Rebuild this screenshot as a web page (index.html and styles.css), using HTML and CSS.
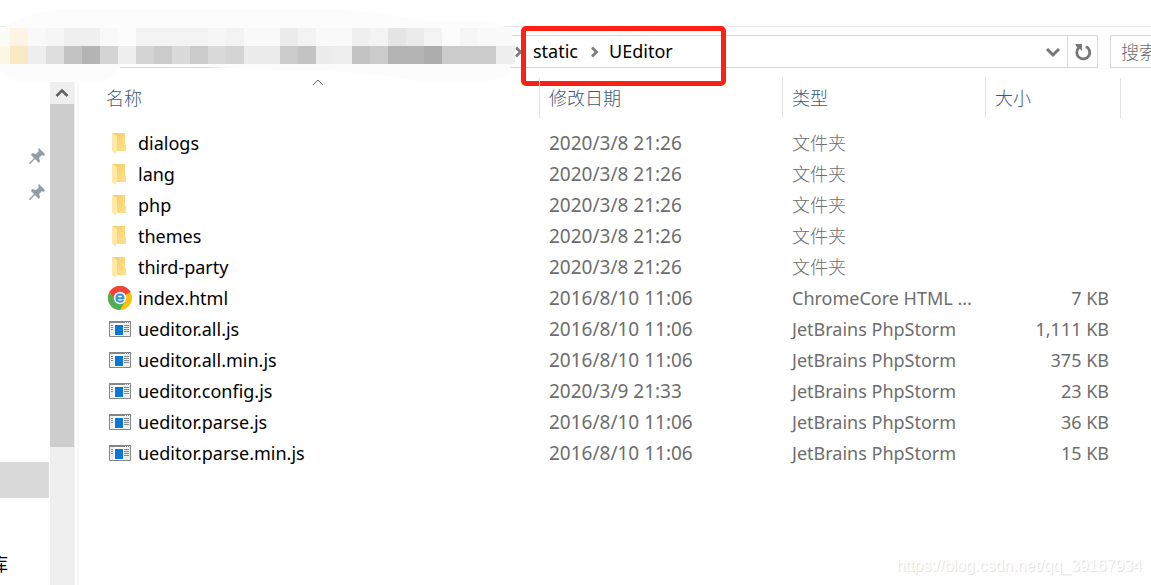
FILE: index.html
```html
<!DOCTYPE html>
<html lang="zh-CN">
<head>
<meta charset="utf-8">
<title>UEditor</title>
<link rel="stylesheet" href="styles.css">
</head>
<body>
<svg class="symbols" aria-hidden="true">
  <defs>
    <linearGradient id="fold" x1="0" x2="1" y1="0" y2="1"><stop offset="0" stop-color="#f3ce68"/><stop offset="1" stop-color="#ffe08a"/></linearGradient>
    <symbol id="folder" viewBox="0 0 24 24"><path fill="url(#fold)" d="M4 2h13v11l1 1v6H8z"/><path fill="#ffe9a8" d="M4 2l5 3v15.500H8V23l-4-3z"/></symbol>
    <symbol id="chrome" viewBox="0 0 24 24">
      <circle cx="12" cy="12" r="12" fill="#ffc107"/>
      <path fill="#f44336" d="M12 12L1.600 6A12 12 0 0 1 22.400 6z"/>
      <path fill="#f44336" d="M12 6h10.400A12 12 0 0 0 1.600 6l5.200 9z"/>
      <path fill="#4caf50" d="M1.600 6A12 12 0 0 0 12 24l5.200-9L12 12 6.800 15z"/>
      <circle cx="12" cy="12" r="6.200" fill="#f4faff"/>
      <path d="M8.500 12.200h7c0-5-7-5-7 0 0 4 5 4.500 6.700 1.800" fill="none" stroke="#3295cf" stroke-width="2"/>
    </symbol>
    <symbol id="app" viewBox="0 0 24 24">
      <path fill="#fff" stroke="#848789" d="M1.500 4.500h21v15h-21z"/><path fill="#848789" d="M1 4h22v2H1z"/>
      <path fill="#eee" d="M2 6h4v13H2zM16 6h6v13h-6z"/><path fill="#0878d7" d="M7 8h8v10H7z"/>
      <path stroke="#85898b" d="M3 8.500h2M3 10.500h2M3 12.500h2M16 8.500h5M16 10.500h5M16 12.500h5M16 14.500h5"/><path stroke="#fff" stroke-dasharray="1 1" d="M17 5.500h5"/>
    </symbol>
    <symbol id="pin" viewBox="0 0 16 16"><path fill="#919da6" d="M10 0l6 6-1 2-2-1-3 3 1 3-1 2-4-4-5 5H0v-1l5-5-3-3 1-2 4 1 3-3-1-1z"/></symbol>
    <symbol id="chevron" viewBox="0 0 10 12"><path d="M2 1.500l4.500 4.500L2 10.500" fill="none" stroke="#7d7d7d" stroke-width="2.800"/></symbol>
  </defs>
</svg>

<header class="toolbar">
  <nav class="address" aria-label="地址">
    <svg class="chevron"><use href="#chevron"/></svg>
    <button class="crumb" type="button">static</button>
    <svg class="chevron"><use href="#chevron"/></svg>
    <button class="crumb" type="button">UEditor</button>
    <button class="tool history" type="button" aria-label="历史记录"><svg width="16" height="12" viewBox="0 0 16 12"><path d="M2 3l6 6 6-6" fill="none" stroke="#777" stroke-width="3"/></svg></button>
    <button class="tool refresh" type="button" aria-label="刷新"><svg width="18" height="18" viewBox="0 0 18 18"><path d="M12 3.500A6.500 6.500 0 1 1 5 4.500" fill="none" stroke="#777" stroke-width="2.800"/><path d="M1 1h7v7L6 6 3.500 5z" fill="#777"/></svg></button>
  </nav>
  <div class="search-box"><input class="search" type="search" aria-label="搜索" placeholder="搜索"></div>
</header>

<svg class="mosaic" width="520" height="64" viewBox="0 0 520 64" aria-hidden="true">
  <path fill="#fcfcfc" d="M0 12Q30-8 60-8H340C390-7 415 5 440 4H490Q512 5 516 32Q513 60 490 63H415C370 54 340 53 275 52L122 45Q115 63 98 63H20Q5 62 0 52z"/>
  <g stroke-width="18" shape-rendering="crispEdges">
    <path stroke="#fcfbf8" d="M0 19h10"/><path stroke="#fdf4e6" d="M10 19h18"/><path stroke="#f9f9f9" d="M28 19h18M100 19h18M244 19h36M316 19h36M478 19h34"/><path stroke="#f6f6f6" d="M46 19h18M208 19h18M460 19h18"/><path stroke="#f0f0f0" d="M64 19h36M352 19h18"/><path stroke="#f3f3f3" d="M136 19h72M226 19h18M298 19h18M370 19h18M424 19h18"/><path stroke="#ebebeb" d="M280 19h18M406 19h18"/><path stroke="#e5e5e5" d="M388 19h18"/>
    <path stroke="#fcf7e6" d="M0 37h10"/><path stroke="#faeac4" d="M10 37h18"/><path stroke="#eee" d="M28 37h18M118 37h18M334 37h18M496 37h19"/><path stroke="#dedede" d="M46 37h18"/><path stroke="#c3c3c3" d="M64 37h18M298 37h18M352 37h18"/><path stroke="#b4b4b4" d="M82 37h18M388 37h36"/><path stroke="#d4d4d4" d="M100 37h18M136 37h18M226 37h18"/><path stroke="#cbcbcb" d="M154 37h18M190 37h18M280 37h18M370 37h18M442 37h54"/><path stroke="#dadada" d="M172 37h18M208 37h18"/><path stroke="#ececec" d="M244 37h36M316 37h18"/><path stroke="#adadad" d="M424 37h18"/>
  </g>
</svg>
<div class="marker" aria-hidden="true"></div>

<main class="window">
  <aside class="sidebar">
    <div class="side-item"><svg class="pin"><use href="#pin"/></svg></div>
    <div class="side-item"><svg class="pin"><use href="#pin"/></svg></div>
    <div class="side-item selected"></div>
    <div class="side-item library">库</div>
  </aside>
  <div class="scrollbar">
    <button class="scroll-up" type="button" aria-label="向上滚动"><svg width="14" height="10" viewBox="0 0 14 10"><path d="M1.500 8L7 2.500 12.500 8" fill="none" stroke="#606060" stroke-width="2.500"/></svg></button>
    <div class="thumb"></div>
  </div>
  <section class="files">
    <table>
      <colgroup><col class="c-name"><col class="c-date"><col class="c-type"><col class="c-size"><col></colgroup>
      <thead><tr>
        <th>名称<svg class="sort" width="12" height="7" viewBox="0 0 12 7"><path d="M1 6l5-5 5 5" fill="none" stroke="#666"/></svg></th>
        <th>修改日期</th><th>类型</th><th>大小</th><th></th>
      </tr></thead>
      <tbody>
        <tr><td><svg class="icon"><use href="#folder"/></svg>dialogs</td><td>2020/3/8 21:26</td><td class="zh">文件夹</td><td></td></tr>
        <tr><td><svg class="icon"><use href="#folder"/></svg>lang</td><td>2020/3/8 21:26</td><td class="zh">文件夹</td><td></td></tr>
        <tr><td><svg class="icon"><use href="#folder"/></svg>php</td><td>2020/3/8 21:26</td><td class="zh">文件夹</td><td></td></tr>
        <tr><td><svg class="icon"><use href="#folder"/></svg>themes</td><td>2020/3/8 21:26</td><td class="zh">文件夹</td><td></td></tr>
        <tr><td><svg class="icon"><use href="#folder"/></svg>third-party</td><td>2020/3/8 21:26</td><td class="zh">文件夹</td><td></td></tr>
        <tr><td><svg class="icon"><use href="#chrome"/></svg>index.html</td><td>2016/8/10 11:06</td><td>ChromeCore HTML ...</td><td>7 KB</td></tr>
        <tr><td><svg class="icon"><use href="#app"/></svg>ueditor.all.js</td><td>2016/8/10 11:06</td><td>JetBrains PhpStorm</td><td>1,111 KB</td></tr>
        <tr><td><svg class="icon"><use href="#app"/></svg>ueditor.all.min.js</td><td>2016/8/10 11:06</td><td>JetBrains PhpStorm</td><td>375 KB</td></tr>
        <tr><td><svg class="icon"><use href="#app"/></svg>ueditor.config.js</td><td>2020/3/9 21:33</td><td>JetBrains PhpStorm</td><td>23 KB</td></tr>
        <tr><td><svg class="icon"><use href="#app"/></svg>ueditor.parse.js</td><td>2016/8/10 11:06</td><td>JetBrains PhpStorm</td><td>36 KB</td></tr>
        <tr><td><svg class="icon"><use href="#app"/></svg>ueditor.parse.min.js</td><td>2016/8/10 11:06</td><td>JetBrains PhpStorm</td><td>15 KB</td></tr>
      </tbody>
    </table>
  </section>
</main>
<div class="watermark">https://blog.csdn.net/qq_39167934</div>
</body>
</html>
```

FILE: styles.css
```css
* { box-sizing: border-box; }
body {
  margin: 0;
  padding-top: 26px;
  min-height: 100vh;
  display: flex;
  flex-direction: column;
  position: relative;
  overflow: hidden;
  background: #fff;
  color: #000;
  font: 18px/24px "Noto Sans", "Noto Sans CJK SC", sans-serif;
}
button, input { font: inherit; border: 0; background: none; padding: 0; margin: 0; }
.symbols { position: absolute; width: 0; height: 0; }

.toolbar {
  display: flex;
  gap: 12px;
  padding-top: 8px;
  border-top: 1px solid #e8e8e8;
}
.address {
  flex: 1;
  height: 33px;
  display: flex;
  align-items: center;
  padding-left: 514px;
  border: 1px solid #d9d9d9;
  border-left: 0;
}
.chevron { width: 10px; height: 12px; flex: none; }
.crumb { padding: 0 12px 2px 9px; }
.tool { display: flex; align-items: center; justify-content: center; height: 31px; }
.history { width: 28px; margin-left: auto; }
.refresh { width: 30px; border-left: 1px solid #d9d9d9; }
.search-box {
  flex: none;
  width: 41px;
  height: 33px;
  padding-left: 10px;
  overflow: hidden;
  border: 1px solid #d9d9d9;
  border-right: 0;
}
.search {
  width: 160px;
  height: 31px;
  outline: 0;
  appearance: none;
  font-weight: 300;
}
.search::placeholder { color: #6d6d6d; opacity: 1; }
.mosaic { position: absolute; left: 0; top: 18px; overflow: visible; }
.marker {
  position: absolute;
  left: 521px;
  top: 26px;
  width: 205px;
  height: 60px;
  border: 5px solid #ff2014;
  border-radius: 5px;
}

.window { flex: 1; display: flex; padding-top: 10px; }
.sidebar { width: 50px; padding: 60px 1px 0 0; overflow: hidden; }
.side-item { height: 36px; display: flex; align-items: center; }
.pin { width: 16px; height: 16px; margin-left: 29px; }
.selected { margin-top: 252px; background: #d9d9d9; }
.library { margin: 48px 0 0 -10px; }
.scrollbar { width: 25px; margin-top: 4px; background: #efefef; }
.scroll-up { width: 24px; height: 22px; display: flex; align-items: center; justify-content: center; }
.thumb { width: 24px; height: 343px; background: #cdcdcd; }
.files { flex: 1; margin-left: 2px; border-left: 2px solid #f7f7f7; padding-left: 18px; }

table { width: 100%; table-layout: fixed; border-collapse: separate; border-spacing: 0; }
.c-name { width: 443px; }
.c-date { width: 243px; }
.c-type { width: 203px; }
.c-size { width: 135px; }
th {
  position: relative;
  height: 40px;
  padding: 0 0 0 9px;
  border-right: 1px solid #e2e2e2;
  text-align: left;
  font-weight: 300;
  color: #3f5876;
}
th:last-child { border-right: 0; }
.sort { position: absolute; left: 215px; top: 1px; }
tbody::before { content: ""; display: block; height: 9px; }
td { height: 31px; padding: 0 0 0 9px; white-space: nowrap; color: #6d6d6d; }
td:first-child { color: #000; }
td:nth-child(2) { font-size: 19px; }
td:nth-child(4) { text-align: right; padding-right: 12px; }
.zh { font-weight: 300; }
.icon { width: 24px; height: 24px; margin: 0 6px 0 2px; vertical-align: -5px; }
.watermark {
  position: absolute;
  right: 9px;
  bottom: 7px;
  font: 16px/24px "Liberation Sans", Arial, sans-serif;
  color: #fff;
  text-shadow: 1px 1px 1px #ddd;
}
```
